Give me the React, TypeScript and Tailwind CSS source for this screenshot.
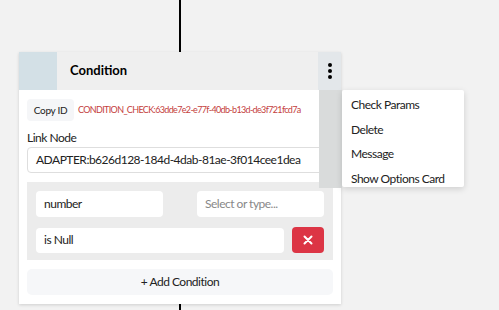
import React from "react";

const menuItems = ["Check Params", "Delete", "Message", "Show Options Card"];

const ConditionCard = () => {
  return (
    <div className="relative w-[322px] bg-white shadow-[0_1px_3px_rgba(0,0,0,0.15)]">
      <div className="flex h-[38px] bg-[#efefef]">
        <div className="w-[38px] bg-[#d3e0e6]" />
        <div className="flex flex-1 items-center pl-[13px] text-[13px] font-bold text-black">
          Condition
        </div>
        <div className="flex w-[23px] flex-col items-center justify-center gap-[2px] bg-[#e3e7ea]">
          <span className="h-[4px] w-[4px] rounded-full bg-black" />
          <span className="h-[4px] w-[4px] rounded-full bg-black" />
          <span className="h-[4px] w-[4px] rounded-full bg-black" />
        </div>
      </div>

      <div className="px-[8px] pb-[9px] pt-[9px] text-[12px] tracking-[-0.5px] text-[#222]">
        <div className="flex h-[22px] items-center gap-[4px] whitespace-nowrap">
          <button className="h-[22px] w-[47px] shrink-0 rounded-[4px] bg-[#f5f6f8] text-[10px] tracking-[-0.3px] text-[#222]">
            Copy ID
          </button>
          <span className="text-[9px] tracking-[-0.65px] text-[#c4403c]">
            CONDITION_CHECK:63dde7e2-e77f-40db-b13d-de3f721fcd7a
          </span>
        </div>

        <div className="mt-[9px] h-[16px] leading-[16px]">Link Node</div>
        <div className="mt-[1px] flex h-[26px] items-center whitespace-nowrap rounded-[4px] border border-[#dedede] px-[8px]">
          ADAPTER:b626d128-184d-4dab-81ae-3f014cee1dea
        </div>

        <div className="mt-[9px] flex flex-col gap-[10px] bg-[#ececec] px-[9px] pb-[7px] pt-[9px]">
          <div className="flex justify-between">
            <div className="flex h-[26px] w-[127px] items-center rounded-[4px] bg-white px-[8px]">
              number
            </div>
            <div className="flex h-[26px] w-[127px] items-center rounded-[4px] bg-white px-[8px] text-[#888]">
              Select or type...
            </div>
          </div>
          <div className="flex items-center gap-[8px]">
            <div className="flex h-[25px] flex-1 items-center rounded-[4px] bg-white px-[8px]">
              is Null
            </div>
            <button className="flex h-[26px] w-[32px] items-center justify-center rounded-[4px] bg-[#dc3545]">
              <svg width="10" height="10" viewBox="0 0 10 10">
                <path d="M1.5 1.5 L8.5 8.5 M8.5 1.5 L1.5 8.5" stroke="white" strokeWidth="2" strokeLinecap="round" />
              </svg>
            </button>
          </div>
        </div>

        <button className="mt-[9px] flex h-[26px] w-full items-center justify-center rounded-[5px] bg-[#f6f7f9] tracking-[-0.5px] text-[#222]">
          + Add Condition
        </button>
      </div>

      <div className="absolute left-[300px] top-[38px] flex">
        <div className="h-[98px] w-[23px] bg-[#d9dbdb]" />
        <div className="h-[97px] w-[122px] rounded-[2px] bg-white pl-[9px] pt-[3px] shadow-[0_2px_6px_rgba(0,0,0,0.15)]">
          {menuItems.map((item) => (
            <div key={item} className="flex h-[24.5px] items-center whitespace-nowrap text-[12px] tracking-[-0.5px] text-[#222]">
              {item}
            </div>
          ))}
        </div>
      </div>
    </div>
  );
};

export default function App() {
  return (
    <div
      className="h-[310px] w-[499px] overflow-hidden bg-[#f2f2f2]"
      style={{ fontFamily: 'Lato, "Noto Sans", sans-serif' }}
    >
      <div className="ml-[19px] flex w-[322px] flex-col items-center">
        <div className="h-[52px] w-[2px] bg-black" />
        <ConditionCard />
        <div className="h-[20px] w-[2px] bg-black" />
      </div>
    </div>
  );
}
